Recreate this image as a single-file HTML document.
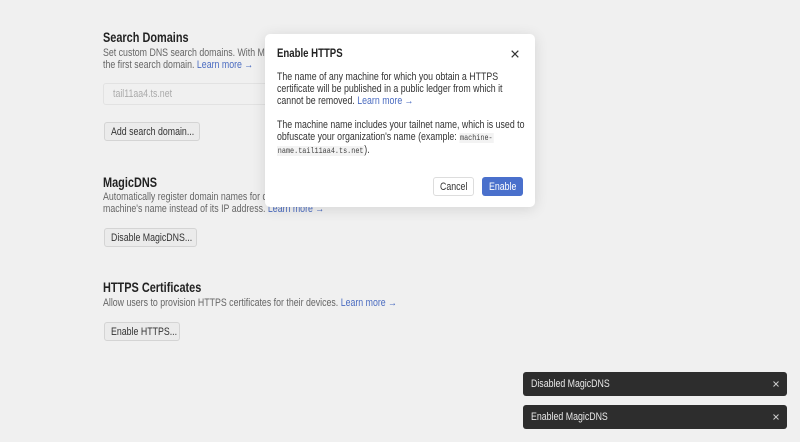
<!DOCTYPE html>
<html><head><meta charset="utf-8"><style>
*{box-sizing:border-box;margin:0;padding:0}
body{width:800px;height:442px;overflow:hidden;background:#f0f0f0;font-family:"Liberation Sans",sans-serif;color:#2a2a2a;position:relative}
.a{position:absolute}
.s{position:absolute;white-space:nowrap;transform:scaleX(.8);transform-origin:0 0}
h2{font-size:14px;font-weight:bold;color:#222;position:absolute;line-height:16px;white-space:nowrap;transform:scaleX(.78);transform-origin:0 0}
p.d{position:absolute;font-size:11px;color:#666;line-height:12px;white-space:nowrap;transform:scaleX(.8);transform-origin:0 0}
a{color:#4a6bc0;text-decoration:none}
.btn{position:absolute;height:19px;border:1px solid #d4d4d4;background:#ebebeb;border-radius:3px}
.btn .s{left:6px;top:3px;font-size:11px;color:#333}
.inp{position:absolute;left:103px;top:83px;width:170px;height:22px;border:1px solid #e2e2e2;border-radius:3px;background:#f0f0f0}
.modal{position:absolute;left:265px;top:34px;width:270px;height:173px;background:#fff;border-radius:5px;box-shadow:0 2px 14px rgba(0,0,0,.12)}
.modal p{position:absolute;left:12px;font-size:11px;line-height:12px;color:#333;white-space:nowrap;transform:scaleX(.8);transform-origin:0 0}
code{font-family:"Liberation Mono",monospace;font-size:8.5px;background:#f3f3f3;color:#444;padding:0 1px}
.toast{position:absolute;left:523px;width:264px;height:24px;background:#2d2d2d;border-radius:3px}
.toast .s{left:8px;top:6px;font-size:11px;color:#e8e8e8}
.toast svg{position:absolute;right:8px;top:9px}
</style></head><body>
<h2 style="left:103px;top:29px">Search Domains</h2>
<div class="a" style="left:103px;top:46px;width:164px;height:14px;overflow:hidden"><p class="d" style="left:0;top:1px">Set custom DNS search domains. With Magic</p></div>
<p class="d" style="left:103px;top:59px">the first search domain. <a>Learn more →</a></p>
<div class="inp"><span class="s" style="left:9px;top:4px;font-size:11px;color:#aaa">tail11aa4.ts.net</span></div>
<div class="btn" style="left:104px;top:122px;width:96px"><span class="s">Add search domain...</span></div>
<h2 style="left:103px;top:174px">MagicDNS</h2>
<div class="a" style="left:103px;top:190px;width:164px;height:14px;overflow:hidden"><p class="d" style="left:0;top:1px">Automatically register domain names for devices</p></div>
<p class="d" style="left:103px;top:203px">machine's name instead of its IP address. <a>Learn more →</a></p>
<div class="btn" style="left:104px;top:228px;width:93px"><span class="s">Disable MagicDNS...</span></div>
<h2 style="left:103px;top:279px">HTTPS Certificates</h2>
<p class="d" style="left:103px;top:297px">Allow users to provision HTTPS certificates for their devices. <a>Learn more →</a></p>
<div class="btn" style="left:104px;top:322px;width:76px"><span class="s">Enable HTTPS...</span></div>

<div class="modal">
<div class="s" style="left:12px;top:12px;font-size:12px;font-weight:bold;color:#222">Enable HTTPS</div>
<svg class="a" style="left:246px;top:16px" width="8" height="8" viewBox="0 0 8 8"><path d="M0.7 0.7L7.3 7.3M7.3 0.7L0.7 7.3" stroke="#333" stroke-width="1.2"/></svg>
<p style="top:37px">The name of any machine for which you obtain a HTTPS<br>certificate will be published in a public ledger from which it<br>cannot be removed. <a>Learn more →</a></p>
<p style="top:85px">The machine name includes your tailnet name, which is used to<br>obfuscate your organization's name (example: <code>machine-</code><br><code>name.tail11aa4.ts.net</code>).</p>
<div class="a" style="left:168px;top:143px;width:41px;height:19px;border:1px solid #ddd;border-radius:3px;background:#fff"><span class="s" style="left:6px;top:3px;font-size:11px;color:#333">Cancel</span></div>
<div class="a" style="left:217px;top:143px;width:41px;height:19px;border-radius:3px;background:#4a70cc"><span class="s" style="left:7px;top:4px;font-size:11px;color:#fff">Enable</span></div>
</div>

<div class="toast" style="top:372px"><span class="s">Disabled MagicDNS</span><svg width="6" height="6" viewBox="0 0 6 6"><path d="M0.5 0.5L5.5 5.5M5.5 0.5L0.5 5.5" stroke="#ccc" stroke-width="1"/></svg></div>
<div class="toast" style="top:405px"><span class="s">Enabled MagicDNS</span><svg width="6" height="6" viewBox="0 0 6 6"><path d="M0.5 0.5L5.5 5.5M5.5 0.5L0.5 5.5" stroke="#ccc" stroke-width="1"/></svg></div>
</body></html>
